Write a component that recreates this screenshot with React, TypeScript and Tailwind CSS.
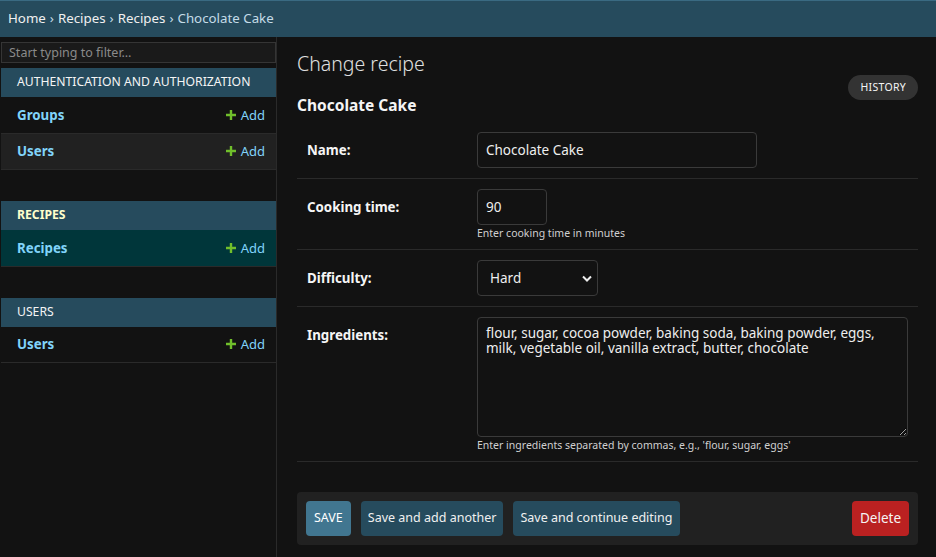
import React from "react";

const modules = [
  {
    name: "Authentication and Authorization",
    current: false,
    models: [{ name: "Groups" }, { name: "Users" }],
  },
  {
    name: "Recipes",
    current: true,
    models: [{ name: "Recipes", selected: true }],
  },
  {
    name: "Users",
    current: false,
    models: [{ name: "Users" }],
  },
];

function PlusIcon() {
  return (
    <svg width="10" height="10" viewBox="0 0 10 10" className="mr-[5px]">
      <path d="M3.8 0h2.4v3.8H10v2.4H6.2V10H3.8V6.2H0V3.8h3.8z" fill="#70bf2b" />
    </svg>
  );
}

function Sidebar() {
  return (
    <nav className="w-[277px] shrink-0 border-r border-[#2a2a2a] pl-px pt-[5px]">
      <input
        placeholder="Start typing to filter…"
        className="block w-full h-[21px] bg-[#1a1a1a] border border-[#353535] px-[7px] text-[12.5px] leading-[19px] text-[#eee] placeholder:text-[#8a8a8a] outline-none"
      />
      <div className="mt-[5px]">
        {modules.map((m, i) => (
          <div key={i} className="mb-[31px]">
            <div
              className={`h-[29px] flex items-center px-4 bg-[#264b5d] text-[12.2px] uppercase whitespace-nowrap ${
                m.current ? "text-[#ffffcc] font-bold" : "text-[#f5f5f5]"
              }`}
            >
              {m.name}
            </div>
            {m.models.map((row, j) => (
              <div
                key={j}
                className={`h-[36.5px] flex items-center justify-between pl-4 pr-[11px] border-b border-[#2a2a2a] leading-[18px] ${
                  row.selected ? "bg-[#00363a]" : j % 2 === 1 ? "bg-[#212121]" : "bg-[#121212]"
                }`}
              >
                <span className="text-[13.3px] font-bold text-[#81d4fa]">{row.name}</span>
                <span className="flex items-center text-[13px] text-[#81d4fa]">
                  <PlusIcon />
                  Add
                </span>
              </div>
            ))}
          </div>
        ))}
      </div>
    </nav>
  );
}

function FormRow({ label, children, help }: { label: string; children: React.ReactNode; help?: string }) {
  return (
    <div className="flex p-[10px] border-b border-[#2a2a2a]">
      <label className="w-[170px] shrink-0 pt-[10px] text-[13.3px] font-bold text-[#f5f5f5] leading-[17px]">
        {label}
      </label>
      <div className="flex-1">
        {children}
        {help && <div className="mt-[2px] text-[10.5px] text-[#d0d0d0] leading-[12px]">{help}</div>}
      </div>
    </div>
  );
}

export default function App() {
  return (
    <div
      className="min-h-screen bg-[#121212] text-[#eee] flex flex-col"
      style={{ fontFamily: '"Noto Sans", "Open Sans", sans-serif' }}
    >
      <div className="h-[37px] shrink-0 bg-[#264b5d] border-t border-[#3a6a82] flex items-center px-2 text-[13.3px] text-[#c4dce8]">
        <span className="text-[#f0f0f0]">Home</span>
        <span className="mx-[4px]">›</span>
        <span className="text-[#f0f0f0]">Recipes</span>
        <span className="mx-[4px]">›</span>
        <span className="text-[#f0f0f0]">Recipes</span>
        <span className="mx-[4px]">›</span>
        <span>Chocolate Cake</span>
      </div>
      <div className="flex flex-1">
        <Sidebar />
        <main className="flex-1 pl-5 pr-[19px] pt-[15px]">
          <div className="flex justify-between items-start">
            <div>
              <h1 className="text-[19.5px] font-light leading-[24px] text-[#e0e0e0]">Change recipe</h1>
              <h2 className="mt-[19px] text-[15.5px] font-bold leading-[20px] text-[#f5f5f5]">Chocolate Cake</h2>
            </div>
            <button className="mt-[23px] h-[25px] px-3 rounded-full bg-[#333] text-[10.5px] uppercase text-[#f5f5f5] tracking-[0.3px]">
              History
            </button>
          </div>

          <div className="mt-[7px]">
            <FormRow label="Name:">
              <input
                defaultValue="Chocolate Cake"
                className="block w-[280px] h-[36px] rounded-[4px] border border-[#3a3a3a] bg-[#121212] px-2 text-[13.5px] text-[#eee] outline-none"
              />
            </FormRow>
            <FormRow label="Cooking time:" help="Enter cooking time in minutes">
              <input
                defaultValue="90"
                className="block w-[70px] h-[36px] rounded-[4px] border border-[#3a3a3a] bg-[#121212] px-2 text-[13.5px] text-[#eee] outline-none"
              />
            </FormRow>
            <FormRow label="Difficulty:">
              <div className="relative w-[121px]">
                <select
                  defaultValue="hard"
                  className="block appearance-none w-full h-[36px] rounded-[4px] border border-[#3a3a3a] bg-[#121212] pl-3 text-[13.5px] text-[#eee] outline-none"
                >
                  <option value="easy">Easy</option>
                  <option value="medium">Medium</option>
                  <option value="hard">Hard</option>
                </select>
                <svg
                  width="10"
                  height="7"
                  viewBox="0 0 10 7"
                  className="absolute right-[6px] top-[15px] pointer-events-none"
                >
                  <path d="M1 1.5l4 4 4-4" stroke="#eee" strokeWidth="2" fill="none" />
                </svg>
              </div>
            </FormRow>
            <FormRow label="Ingredients:" help="Enter ingredients separated by commas, e.g., 'flour, sugar, eggs'">
              <textarea
                defaultValue="flour, sugar, cocoa powder, baking soda, baking powder, eggs, milk, vegetable oil, vanilla extract, butter, chocolate"
                className="block w-[431px] h-[120px] rounded-[4px] border border-[#3a3a3a] bg-[#121212] px-2 pt-[8px] text-[13.5px] leading-[15px] text-[#eee] outline-none"
              />
            </FormRow>
          </div>

          <div className="mt-[30px] flex items-center gap-[10px] p-[9px] rounded-[4px] bg-[#212121]">
            <button className="h-[35px] px-[8px] rounded-[4px] bg-[#417690] text-[12.5px] text-white">SAVE</button>
            <button className="h-[35px] px-[7px] rounded-[4px] bg-[#264b5d] text-[12.5px] text-[#f0f0f0]">
              Save and add another
            </button>
            <button className="h-[35px] px-[7px] rounded-[4px] bg-[#264b5d] text-[12.5px] text-[#f0f0f0]">
              Save and continue editing
            </button>
            <button className="ml-auto h-[35px] px-[8px] rounded-[4px] bg-[#ba2121] text-[13.5px] text-[#f5f5f5]">
              Delete
            </button>
          </div>
        </main>
      </div>
    </div>
  );
}
